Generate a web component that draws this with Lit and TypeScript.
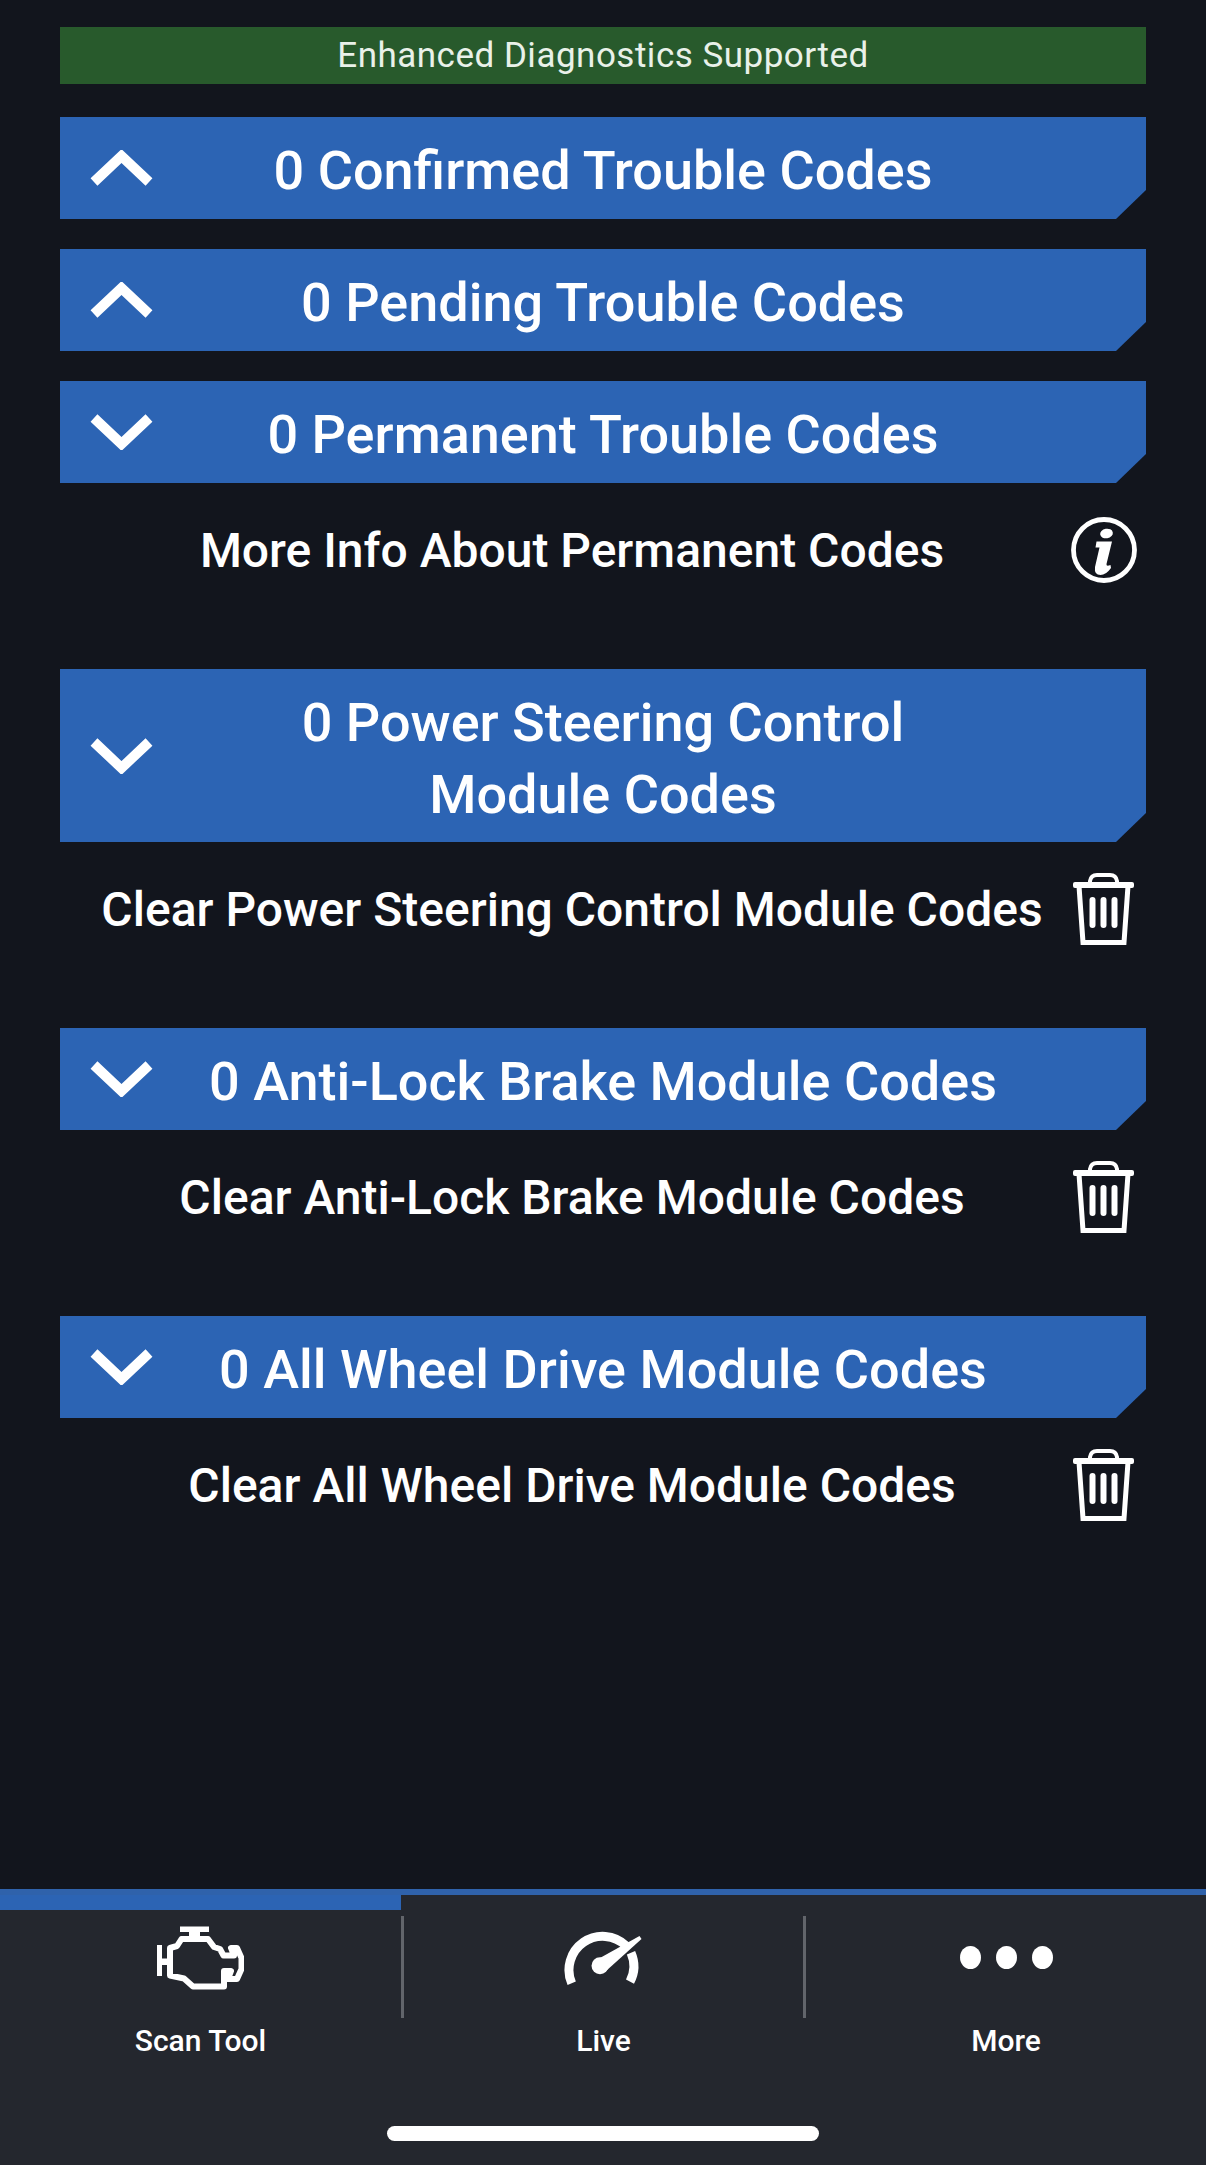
import {LitElement, css, html} from 'lit';
import {customElement} from 'lit/decorators.js';

const chevron = (up: boolean) => html`
  <svg class="chevron" viewBox="0 0 63 36">
    <path
      d=${up ? 'M4 32 L31.5 6 L59 32' : 'M4 4 L31.5 30 L59 4'}
      fill="none" stroke="#fff" stroke-width="10"></path>
  </svg>
`;

const infoIcon = html`
  <svg class="row-icon" width="66" height="66" viewBox="0 0 66 66">
    <circle cx="33" cy="33" r="30.5" fill="none" stroke="#fff" stroke-width="4.8"></circle>
    <ellipse cx="35.5" cy="16.5" rx="6.4" ry="4.8" fill="#fff" transform="rotate(-10 35.5 16.5)"></ellipse>
    <path d="M25.5 24.5H41L35.5 47Q35 50 39.5 48L40 51Q35 58 29.5 58Q23 58 24 50L28.5 30.5H24.5Z" fill="#fff"></path>
  </svg>
`;

const trashIcon = html`
  <svg class="row-icon trash" width="61" height="72" viewBox="0 0 61 72">
    <path d="M17 10V8Q18 2 24 2H37Q43 2 44 8V10" fill="none" stroke="#fff" stroke-width="4"></path>
    <rect x="0" y="9" width="61" height="6" rx="2" fill="#fff"></rect>
    <path d="M6 13L10 69.5H51L55 13" fill="none" stroke="#fff" stroke-width="5"></path>
    <rect x="16.5" y="24" width="6" height="31" rx="3" fill="#fff"></rect>
    <rect x="27.5" y="24" width="6" height="31" rx="3" fill="#fff"></rect>
    <rect x="38.5" y="24" width="6" height="31" rx="3" fill="#fff"></rect>
  </svg>
`;

const engineIcon = html`
  <svg width="87" height="64" viewBox="0 0 87 64">
    <rect x="23" y="0.5" width="29" height="5.5" fill="#fff"></rect>
    <rect x="32" y="5" width="11" height="8" fill="#fff"></rect>
    <path d="M24.5 13H51L57 21L63 23L66.5 29.5H77L74 22H80L84.5 32V43L80 53H71L74 45H67V60.5H36L27 52.5L13 49.5V22L20 20Z"
      fill="none" stroke="#fff" stroke-width="6" stroke-linejoin="round"></path>
    <path d="M2.5 19V50" fill="none" stroke="#fff" stroke-width="5"></path>
    <rect x="0" y="32.5" width="13" height="6.5" fill="#fff"></rect>
  </svg>
`;

const gaugeIcon = html`
  <svg width="80" height="60" viewBox="0 0 80 60">
    <g transform="translate(-2 0)">
      <path d="M9.7 55.3A33.7 33.7 0 0 1 64 17.7" fill="none" stroke="#fff" stroke-width="9"></path>
      <path d="M69 24.7A33.7 33.7 0 0 1 68 53.7" fill="none" stroke="#fff" stroke-width="9"></path>
      <circle cx="38" cy="37.7" r="8.5" fill="#fff"></circle>
      <path d="M37 30.5L77.5 8L79.5 11L44 43Z" fill="#fff"></path>
    </g>
  </svg>
`;

const dotsIcon = html`
  <div class="dots"><span></span><span></span><span></span></div>
`;

interface Section {
  title: unknown;
  up: boolean;
  action?: string;
  info?: boolean;
}

const SECTIONS: Section[] = [
  {title: '0 Confirmed Trouble Codes', up: true},
  {title: '0 Pending Trouble Codes', up: true},
  {title: '0 Permanent Trouble Codes', up: false, action: 'More Info About Permanent Codes', info: true},
  {
    title: html`0 Power Steering Control<br />Module Codes`,
    up: false,
    action: 'Clear Power Steering Control Module Codes',
  },
  {title: '0 Anti-Lock Brake Module Codes', up: false, action: 'Clear Anti-Lock Brake Module Codes'},
  {title: '0 All Wheel Drive Module Codes', up: false, action: 'Clear All Wheel Drive Module Codes'},
];

@customElement('app-root')
export class AppRoot extends LitElement {
  static styles = css`
    :host {
      display: flex;
      flex-direction: column;
      height: 2165px;
      background: #12151d;
      color: #fff;
      font-family: Roboto, 'Noto Sans', sans-serif;
    }

    .main {
      flex: 1;
      display: flex;
      flex-direction: column;
      padding: 27px 60px 0;
    }

    .banner {
      height: 57px;
      margin-bottom: 33px;
      background: #285a2c;
      color: #e9f1e9;
      display: flex;
      align-items: center;
      justify-content: center;
      font-size: 35px;
      letter-spacing: 0.5px;
    }

    .section {
      margin-bottom: 30px;
    }

    .section.has-action {
      margin-bottom: 52px;
    }

    .header {
      position: relative;
      min-height: 102px;
      padding: 18px 0 12px;
      box-sizing: border-box;
      background: #2c64b4;
      display: flex;
      align-items: center;
      justify-content: center;
      text-align: center;
      font-size: 54px;
      font-weight: 500;
      line-height: 71.5px;
      clip-path: polygon(0 0, 100% 0, 100% calc(100% - 29px), calc(100% - 30px) 100%, 0 100%);
    }

    .chevron {
      position: absolute;
      left: 30px;
      top: 50%;
      width: 63px;
      height: 36px;
      transform: translateY(-50%);
    }

    .row {
      display: grid;
      grid-template-columns: 996px 68px;
      height: 134px;
      padding-left: 14px;
      align-items: center;
      font-size: 48px;
      font-weight: 500;
      text-align: center;
    }

    .row-icon {
      display: block;
      justify-self: center;
    }

    .row-icon.trash {
      margin-right: 2px;
    }

    .nav {
      display: grid;
      grid-template-columns: 401px 3px 1fr 3px 400px;
      align-content: start;
      border-top: 6px solid #2f62ab;
      background: #24272e;
      height: 276px;
      box-sizing: border-box;
    }

    .tab {
      display: flex;
      flex-direction: column;
      align-items: center;
      border-top: 15px solid transparent;
    }

    .tab.active {
      border-top-color: #2c64b4;
    }

    .tab-icon {
      height: 96px;
      display: flex;
      align-items: center;
      justify-content: center;
    }

    .tab-label {
      margin-top: 17px;
      font-size: 30px;
      font-weight: 500;
      line-height: 36px;
    }

    .divider {
      height: 102px;
      margin-top: 21px;
      background: #62656b;
    }

    .dots {
      display: flex;
      gap: 15px;
      margin-top: -2px;
    }

    .dots span {
      width: 21px;
      height: 23px;
      border-radius: 50%;
      background: #fff;
    }

    .home-row {
      grid-column: 1 / -1;
      margin-top: 67px;
      display: flex;
      justify-content: center;
    }

    .home-bar {
      width: 432px;
      height: 15px;
      border-radius: 8px;
      background: #fff;
    }
  `;

  render() {
    return html`
      <div class="main">
        <div class="banner">Enhanced Diagnostics Supported</div>
        ${SECTIONS.map(
          (s) => html`
            <div class="section ${s.action ? 'has-action' : ''}">
              <div class="header">${chevron(s.up)}<span>${s.title}</span></div>
              ${s.action
                ? html`<div class="row">
                    <span>${s.action}</span>${s.info ? infoIcon : trashIcon}
                  </div>`
                : ''}
            </div>
          `,
        )}
      </div>
      <div class="nav">
        <div class="tab active">
          <div class="tab-icon">${engineIcon}</div>
          <div class="tab-label">Scan Tool</div>
        </div>
        <div class="divider"></div>
        <div class="tab">
          <div class="tab-icon">${gaugeIcon}</div>
          <div class="tab-label">Live</div>
        </div>
        <div class="divider"></div>
        <div class="tab">
          <div class="tab-icon">${dotsIcon}</div>
          <div class="tab-label">More</div>
        </div>
        <div class="home-row"><div class="home-bar"></div></div>
      </div>
    `;
  }
}
